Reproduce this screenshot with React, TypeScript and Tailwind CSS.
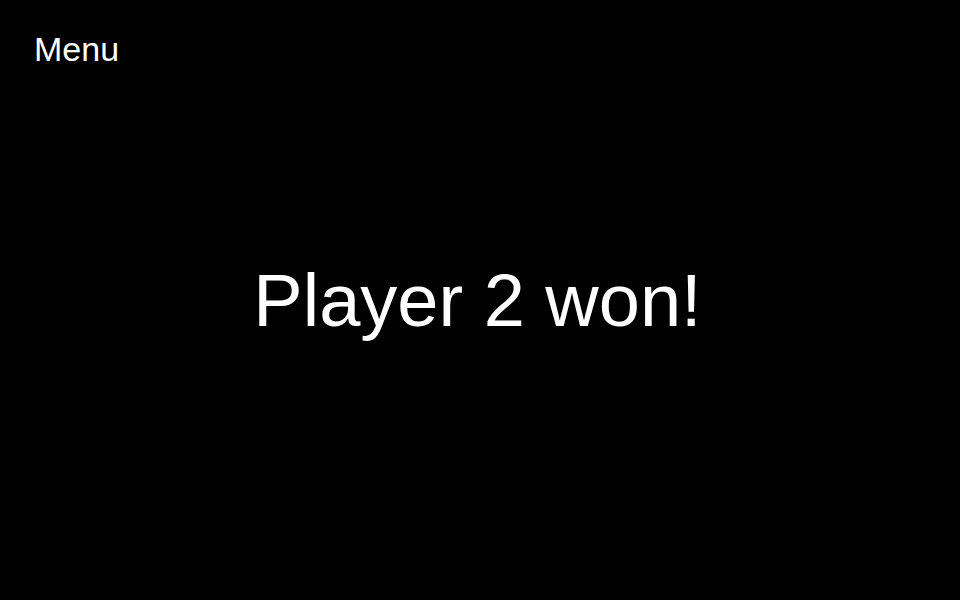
export default function App() {
  return (
    <div className="relative flex h-[600px] w-[960px] flex-col bg-black text-white" style={{ fontFamily: '"Liberation Sans", Arial, sans-serif' }}>
      <div className="px-[34px] pt-[32px]">
        <button className="text-[34px] leading-none text-white">Menu</button>
      </div>
      <div className="flex flex-1 items-center justify-center pb-[66px] pr-[5px]">
        <h1 className="text-[74px] leading-none font-normal">Player 2 won!</h1>
      </div>
    </div>
  );
}
